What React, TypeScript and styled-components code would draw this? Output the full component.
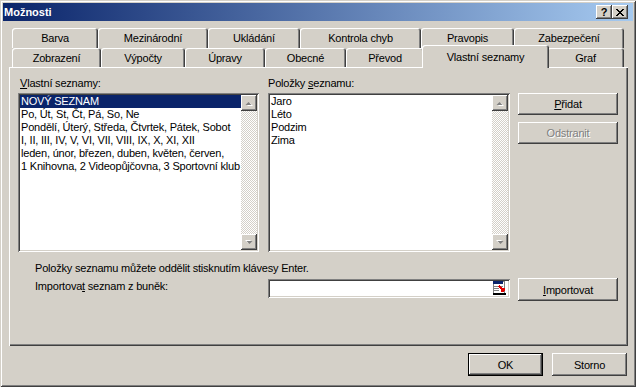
import React from 'react';
import styled, { createGlobalStyle, css } from 'styled-components';

const GlobalStyle = createGlobalStyle`
  html, body {
    margin: 0;
    padding: 0;
    background: #d4d0c8;
  }
  body {
    font-family: "Liberation Sans", Arial, sans-serif;
    font-size: 11px;
    letter-spacing: -0.2px;
    color: #000;
  }
`;

const raised = css`
  box-shadow: inset -1px -1px #404040, inset 1px 1px #ffffff,
    inset -2px -2px #808080, inset 2px 2px #d4d0c8;
`;

const sunken = css`
  box-shadow: inset 1px 1px #808080, inset -1px -1px #ffffff,
    inset 2px 2px #404040, inset -2px -2px #d4d0c8;
`;

const Window = styled.div`
  width: 636px;
  height: 387px;
  box-sizing: border-box;
  padding: 3px;
  background: #d4d0c8;
  display: flex;
  flex-direction: column;
  box-shadow: inset 1px 1px #d4d0c8, inset -1px -1px #404040,
    inset 2px 2px #ffffff, inset -2px -2px #808080;
`;

const TitleBar = styled.div`
  height: 18px;
  display: flex;
  align-items: center;
  padding: 0 5px 0 1px;
  background: linear-gradient(to right, #0a246a, #a6caf0);
`;

const Title = styled.span`
  flex: 1;
  color: #fff;
  font-weight: bold;
  font-size: 11px;
  letter-spacing: 0;
`;

const CaptionButton = styled.div`
  width: 16px;
  height: 14px;
  box-sizing: border-box;
  background: #d4d0c8;
  display: flex;
  align-items: center;
  justify-content: center;
  font-weight: bold;
  font-size: 11px;
  line-height: 14px;
  ${raised}
`;

const Body = styled.div`
  flex: 1;
  display: flex;
  flex-direction: column;
  padding: 7px 5px 0 6px;
`;

const TabStrip = styled.div`
  display: flex;
  flex-direction: column;
  margin-left: 3px;
`;

const TabRow = styled.div<{ $h: number }>`
  display: flex;
  height: ${p => p.$h}px;
`;

const Tab = styled.div<{ $w: number; $active?: boolean }>`
  width: ${p => p.$w}px;
  height: 100%;
  box-sizing: border-box;
  text-align: center;
  padding-top: 4px;
  white-space: nowrap;
  background: #d4d0c8;
  border-radius: 3px 3px 0 0;
  box-shadow: inset 1px 1px #ffffff, inset -1px 0 #404040, inset -2px 0 #808080;
  ${p =>
    p.$active &&
    css`
      position: relative;
      z-index: 1;
      align-self: flex-start;
      width: ${p.$w + 4}px;
      height: 23px;
      margin: -3px -2px 0;
      padding-top: 6px;
    `}
`;

const Panel = styled.div`
  height: 279px;
  box-sizing: border-box;
  padding: 10px 9px 0;
  display: flex;
  flex-direction: column;
  box-shadow: inset 1px 1px #ffffff, inset -1px -1px #404040, inset -2px -2px #808080;
`;

const Columns = styled.div`
  display: flex;
  align-items: flex-start;
`;

const Column = styled.div<{ $w: number; $gap: number }>`
  width: ${p => p.$w}px;
  margin-right: ${p => p.$gap}px;
  display: flex;
  flex-direction: column;
`;

const Label = styled.div<{ $indent?: number }>`
  height: 16px;
  line-height: 13px;
  padding-left: ${p => p.$indent ?? 2}px;
  white-space: nowrap;
`;

const ListBox = styled.div`
  height: 159px;
  box-sizing: border-box;
  padding: 2px;
  display: flex;
  background: #fff;
  ${sunken}
`;

const Items = styled.div`
  flex: 1;
  min-width: 0;
  overflow: hidden;
`;

const Item = styled.div<{ $selected?: boolean }>`
  height: 13px;
  line-height: 13px;
  padding-left: 1px;
  white-space: nowrap;
  overflow: hidden;
  background: ${p => (p.$selected ? '#0a246a' : 'transparent')};
  color: ${p => (p.$selected ? '#fff' : '#000')};
`;

const ScrollBar = styled.div`
  width: 16px;
  flex-shrink: 0;
  display: flex;
  flex-direction: column;
  background: repeating-conic-gradient(#ffffff 0 25%, #d4d0c8 0 50%) 0 0 / 2px 2px;
`;

const ArrowButton = styled.div`
  width: 16px;
  height: 16px;
  box-sizing: border-box;
  background: #d4d0c8;
  display: flex;
  align-items: center;
  justify-content: center;
  ${raised}
`;

const Track = styled.div`
  flex: 1;
`;

const ButtonStack = styled.div`
  display: flex;
  flex-direction: column;
  gap: 7px;
  margin-top: 16px;
`;

const Button = styled.button<{ $w: number; $h?: number; $default?: boolean }>`
  width: ${p => p.$w}px;
  height: ${p => p.$h ?? 23}px;
  box-sizing: border-box;
  border: 0;
  padding: 0;
  margin: 0;
  background: #d4d0c8;
  font: inherit;
  letter-spacing: inherit;
  color: #000;
  ${p =>
    p.$default
      ? css`
          box-shadow: inset 0 0 0 1px #000000, inset -2px -2px #404040,
            inset 2px 2px #ffffff, inset -3px -3px #808080;
        `
      : raised}
  &:disabled {
    color: #808080;
    text-shadow: 1px 1px #ffffff;
  }
`;

const Hint = styled.div`
  margin-top: 10px;
  padding-left: 17px;
  line-height: 13px;
`;

const ImportRow = styled.div`
  display: flex;
  align-items: flex-start;
  margin-top: 3px;
  padding-left: 17px;
`;

const ImportLabel = styled.div`
  width: 233px;
  padding-top: 2px;
  line-height: 13px;
`;

const RangeInput = styled.div`
  width: 242px;
  height: 19px;
  margin: 1px 8px 0 0;
  box-sizing: border-box;
  padding: 2px 3px 0 2px;
  display: flex;
  justify-content: flex-end;
  background: #fff;
  ${sunken}
`;

const Footer = styled.div`
  display: flex;
  justify-content: flex-end;
  gap: 9px;
  margin-top: 7px;
  padding-right: 1px;
`;

const Arrow = ({ down }: { down?: boolean }) => (
  <svg width="8" height="5" viewBox="0 0 8 5">
    <g transform={down ? 'rotate(180 4 2.5)' : undefined}>
      <path d="M1 5 L4 2 L7 5 Z" fill="#ffffff" transform="translate(1 0)" />
      <path d="M0.5 4 L3.5 1 L6.5 4 Z" fill="#808080" />
    </g>
  </svg>
);

const CloseGlyph = () => (
  <svg width="8" height="7" viewBox="0 0 8 7" shapeRendering="crispEdges">
    <path
      d="M0 0h2v1h-2zM6 0h2v1h-2zM1 1h2v1h-2zM5 1h2v1h-2zM2 2h4v1h-4zM3 3h2v1h-2zM2 4h4v1h-4zM1 5h2v1h-2zM5 5h2v1h-2zM0 6h2v1h-2zM6 6h2v1h-2z"
      fill="#000"
    />
  </svg>
);

const RangeIcon = () => (
  <svg width="14" height="14" viewBox="0 0 14 14" shapeRendering="crispEdges">
    <rect x="0.5" y="0.5" width="11" height="12" fill="#ffffff" stroke="#808080" strokeWidth="1" />
    <rect x="0" y="0" width="10" height="3" fill="#0a246a" />
    <rect x="1" y="5" width="9" height="1" fill="#808080" />
    <rect x="1" y="7" width="5" height="1" fill="#808080" />
    <rect x="1" y="9" width="5" height="1" fill="#808080" />
    <rect x="0" y="12" width="13" height="2" fill="#000000" />
    <path d="M6 5 L11 10 M11 10 L11 7 M11 10 L8 10" stroke="#e00000" strokeWidth="1.5" fill="none" />
  </svg>
);

const backRow = [
  { label: 'Barva', w: 86 },
  { label: 'Mezinárodní', w: 110 },
  { label: 'Ukládání', w: 92 },
  { label: 'Kontrola chyb', w: 121 },
  { label: 'Pravopis', w: 93 },
  { label: 'Zabezpečení', w: 110 },
];

const frontRow = [
  { label: 'Zobrazení', w: 89 },
  { label: 'Výpočty', w: 84 },
  { label: 'Úpravy', w: 80 },
  { label: 'Obecné', w: 81 },
  { label: 'Převod', w: 78 },
  { label: 'Vlastní seznamy', w: 123, active: true },
  { label: 'Graf', w: 77 },
];

// the list box cuts the long rows, so only the visible part is kept
const customLists = [
  'NOVÝ SEZNAM',
  'Po, Út, St, Čt, Pá, So, Ne',
  'Pondělí, Úterý, Středa, Čtvrtek, Pátek, Sobot',
  'I, II, III, IV, V, VI, VII, VIII, IX, X, XI, XII',
  'leden, únor, březen, duben, květen, červen,',
  '1 Knihovna, 2 Videopůjčovna, 3 Sportovní klub',
];

const entries = ['Jaro', 'Léto', 'Podzim', 'Zima'];

const Scroller = () => (
  <ScrollBar>
    <ArrowButton>
      <Arrow />
    </ArrowButton>
    <Track />
    <ArrowButton>
      <Arrow down />
    </ArrowButton>
  </ScrollBar>
);

const App: React.FC = () => {
  return (
    <>
      <GlobalStyle />
      <Window>
        <TitleBar>
          <Title>Možnosti</Title>
          <CaptionButton>?</CaptionButton>
          <CaptionButton>
            <CloseGlyph />
          </CaptionButton>
        </TitleBar>
        <Body>
          <TabStrip>
            <TabRow $h={20}>
              {backRow.map(t => (
                <Tab key={t.label} $w={t.w}>
                  {t.label}
                </Tab>
              ))}
            </TabRow>
            <TabRow $h={19}>
              {frontRow.map(t => (
                <Tab key={t.label} $w={t.w} $active={t.active}>
                  {t.label}
                </Tab>
              ))}
            </TabRow>
          </TabStrip>
          <Panel>
            <Columns>
              <Column $w={241} $gap={9}>
                <Label>
                  <u>V</u>lastní seznamy:
                </Label>
                <ListBox>
                  <Items>
                    {customLists.map((l, i) => (
                      <Item key={l} $selected={i === 0}>
                        {l}
                      </Item>
                    ))}
                  </Items>
                  <Scroller />
                </ListBox>
              </Column>
              <Column $w={242} $gap={8}>
                <Label $indent={0}>
                  Položky <u>s</u>eznamu:
                </Label>
                <ListBox>
                  <Items>
                    {entries.map(e => (
                      <Item key={e}>{e}</Item>
                    ))}
                  </Items>
                  <Scroller />
                </ListBox>
              </Column>
              <ButtonStack>
                <Button $w={100} $h={22}>
                  <u>P</u>řidat
                </Button>
                <Button $w={100} $h={22} disabled>
                  Odstranit
                </Button>
              </ButtonStack>
            </Columns>
            <Hint>Položky seznamu můžete oddělit stisknutím klávesy Enter.</Hint>
            <ImportRow>
              <ImportLabel>
                Importova<u>t</u> seznam z buněk:
              </ImportLabel>
              <RangeInput>
                <RangeIcon />
              </RangeInput>
              <Button $w={100}>
                <u>I</u>mportovat
              </Button>
            </ImportRow>
          </Panel>
          <Footer>
            <Button $w={75} $default>
              OK
            </Button>
            <Button $w={75}>Storno</Button>
          </Footer>
        </Body>
      </Window>
    </>
  );
};

export default App;
